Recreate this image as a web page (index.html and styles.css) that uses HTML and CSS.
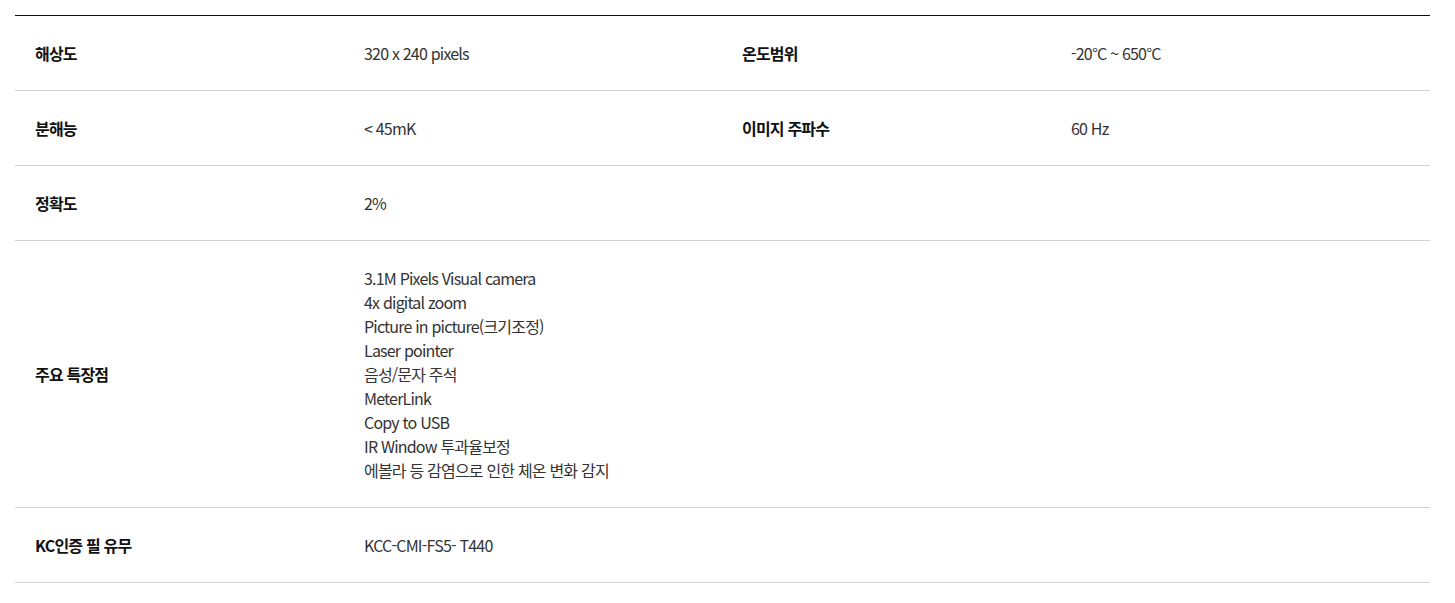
FILE: index.html
```html
<!DOCTYPE html>
<html lang="ko">
<head>
<meta charset="utf-8">
<link rel="stylesheet" href="styles.css">
</head>
<body>
<div class="spec">
  <table class="spec-table">
    <colgroup>
      <col class="c-label"><col class="c-value"><col class="c-label"><col class="c-value2">
    </colgroup>
    <tbody>
      <tr>
        <th>해상도</th><td>320 x 240 pixels</td>
        <th>온도범위</th><td>-20°C ~ 650°C</td>
      </tr>
      <tr>
        <th>분해능</th><td>&lt; 45mK</td>
        <th>이미지 주파수</th><td>60 Hz</td>
      </tr>
      <tr>
        <th>정확도</th><td colspan="3">2%</td>
      </tr>
      <tr>
        <th>주요 특장점</th>
        <td colspan="3">3.1M Pixels Visual camera<br>4x digital zoom<br>Picture in picture(크기조정)<br>Laser pointer<br>음성/문자 주석<br>MeterLink<br>Copy to USB<br>IR Window 투과율보정<br>에볼라 등 감염으로 인한 체온 변화 감지</td>
      </tr>
      <tr>
        <th>KC인증 필 유무</th><td colspan="3">KCC-CMI-FS5- T440</td>
      </tr>
    </tbody>
  </table>
</div>
</body>
</html>
```

FILE: styles.css
```css
html, body {
  margin: 0;
  padding: 0;
  background: #fff;
}
body {
  font-family: "Noto Sans CJK KR", "Noto Sans", sans-serif;
  color: #222;
}
.spec {
  padding: 15px 25px 0 15px;
}
.spec-table {
  width: 1415px;
  border-collapse: collapse;
  table-layout: fixed;
  border-top: 1px solid #111;
}
.c-label { width: 329px; }
.c-value { width: 378px; }
.c-value2 { width: 379px; }
.spec-table th,
.spec-table td {
  padding: 25px 20px;
  font-size: 16px;
  line-height: 24px;
  letter-spacing: -0.8px;
  text-align: left;
  vertical-align: middle;
  border-bottom: 1px solid #d2d2d2;
}
.spec-table th {
  font-weight: 700;
  color: #111;
}
.spec-table td {
  font-weight: 400;
  color: #333;
}
```
